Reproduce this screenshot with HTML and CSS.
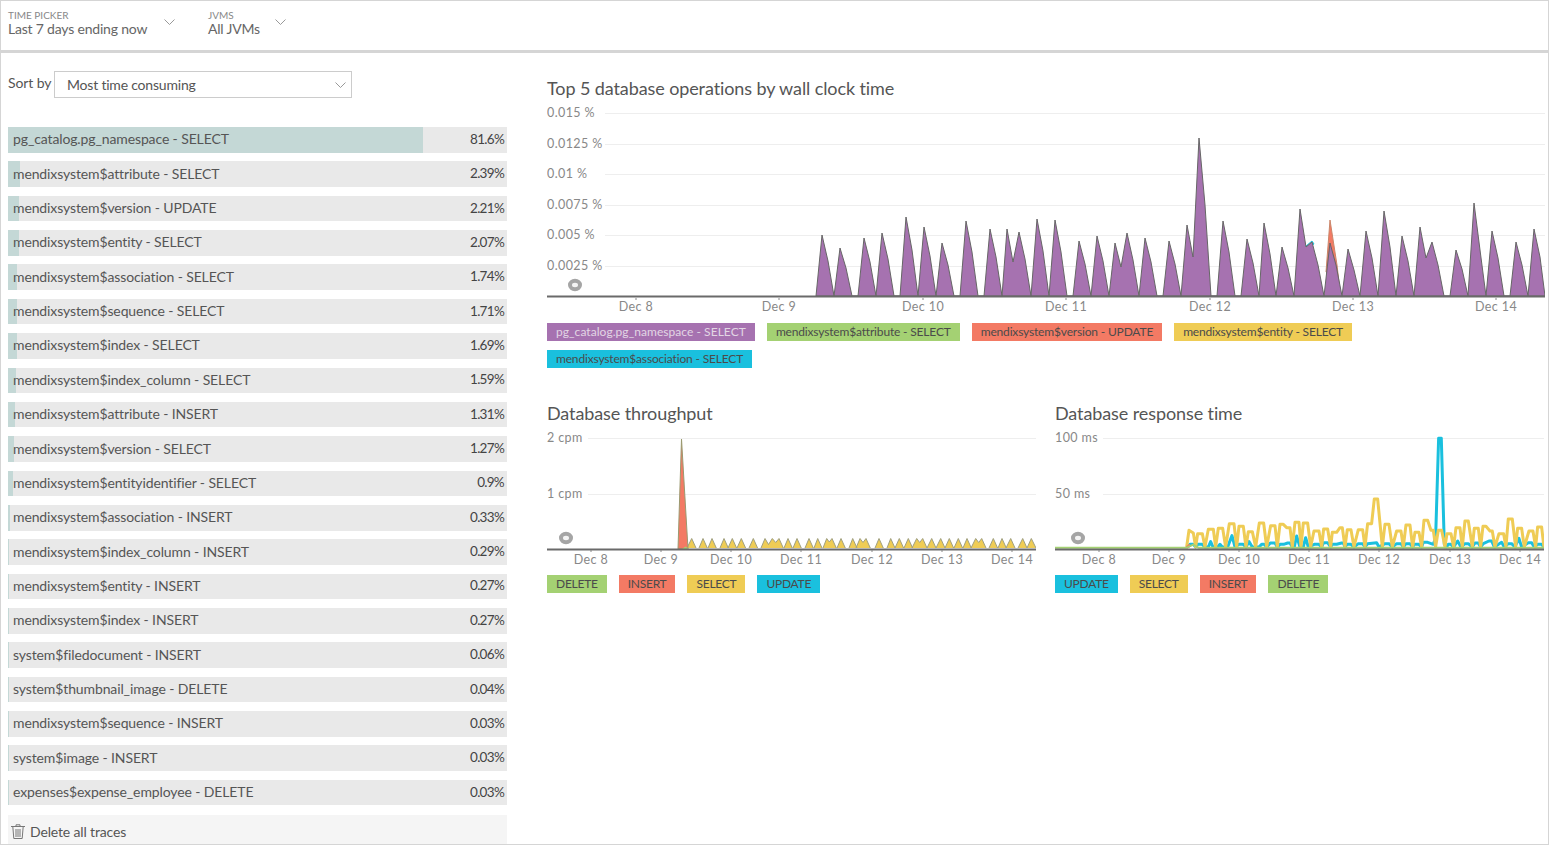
FILE: index.html
```html
<!DOCTYPE html>
<html lang="en">
<head>
  <meta charset="UTF-8">
  <title>Database</title>
  <link rel="stylesheet" href="styles.css">
</head>
<body>

  <header class="topbar">
    <div class="picker picker-time">
      <div class="picker-text">
        <span class="picker-label">Time picker</span>
        <span class="picker-value">Last 7 days ending now</span>
      </div>
      <svg class="chevron" width="11" height="6" viewBox="0 0 11 6"><path d="M.5.5l5 5 5-5"/></svg>
    </div>
    <div class="picker picker-jvm">
      <div class="picker-text">
        <span class="picker-label">JVMs</span>
        <span class="picker-value">All JVMs</span>
      </div>
      <svg class="chevron" width="11" height="6" viewBox="0 0 11 6"><path d="M.5.5l5 5 5-5"/></svg>
    </div>
  </header>

  <main class="content">
    <aside class="sidebar">
      <div class="sort">
        <span class="sort-label">Sort by</span>
        <div class="sort-select">
          <span>Most time consuming</span>
          <svg class="chevron" width="11" height="6" viewBox="0 0 11 6"><path d="M.5.5l5 5 5-5"/></svg>
        </div>
      </div>

      <ul class="ops">
        <li class="op"><span class="op-fill" style="width:83.2%"></span><span class="op-name">pg_catalog.pg_namespace - SELECT</span><span class="op-pct">81.6%</span></li>
        <li class="op"><span class="op-fill" style="width:2.44%"></span><span class="op-name">mendixsystem$attribute - SELECT</span><span class="op-pct">2.39%</span></li>
        <li class="op"><span class="op-fill" style="width:2.25%"></span><span class="op-name">mendixsystem$version - UPDATE</span><span class="op-pct">2.21%</span></li>
        <li class="op"><span class="op-fill" style="width:2.11%"></span><span class="op-name">mendixsystem$entity - SELECT</span><span class="op-pct">2.07%</span></li>
        <li class="op"><span class="op-fill" style="width:1.77%"></span><span class="op-name">mendixsystem$association - SELECT</span><span class="op-pct">1.74%</span></li>
        <li class="op"><span class="op-fill" style="width:1.74%"></span><span class="op-name">mendixsystem$sequence - SELECT</span><span class="op-pct">1.71%</span></li>
        <li class="op"><span class="op-fill" style="width:1.72%"></span><span class="op-name">mendixsystem$index - SELECT</span><span class="op-pct">1.69%</span></li>
        <li class="op"><span class="op-fill" style="width:1.62%"></span><span class="op-name">mendixsystem$index_column - SELECT</span><span class="op-pct">1.59%</span></li>
        <li class="op"><span class="op-fill" style="width:1.34%"></span><span class="op-name">mendixsystem$attribute - INSERT</span><span class="op-pct">1.31%</span></li>
        <li class="op"><span class="op-fill" style="width:1.3%"></span><span class="op-name">mendixsystem$version - SELECT</span><span class="op-pct">1.27%</span></li>
        <li class="op"><span class="op-fill" style="width:.92%"></span><span class="op-name">mendixsystem$entityidentifier - SELECT</span><span class="op-pct">0.9%</span></li>
        <li class="op"><span class="op-fill" style="width:.34%"></span><span class="op-name">mendixsystem$association - INSERT</span><span class="op-pct">0.33%</span></li>
        <li class="op"><span class="op-fill" style="width:.3%"></span><span class="op-name">mendixsystem$index_column - INSERT</span><span class="op-pct">0.29%</span></li>
        <li class="op"><span class="op-fill" style="width:.28%"></span><span class="op-name">mendixsystem$entity - INSERT</span><span class="op-pct">0.27%</span></li>
        <li class="op"><span class="op-fill" style="width:.28%"></span><span class="op-name">mendixsystem$index - INSERT</span><span class="op-pct">0.27%</span></li>
        <li class="op"><span class="op-fill" style="width:.06%"></span><span class="op-name">system$filedocument - INSERT</span><span class="op-pct">0.06%</span></li>
        <li class="op"><span class="op-fill" style="width:.04%"></span><span class="op-name">system$thumbnail_image - DELETE</span><span class="op-pct">0.04%</span></li>
        <li class="op"><span class="op-fill" style="width:.03%"></span><span class="op-name">mendixsystem$sequence - INSERT</span><span class="op-pct">0.03%</span></li>
        <li class="op"><span class="op-fill" style="width:.03%"></span><span class="op-name">system$image - INSERT</span><span class="op-pct">0.03%</span></li>
        <li class="op"><span class="op-fill" style="width:.03%"></span><span class="op-name">expenses$expense_employee - DELETE</span><span class="op-pct">0.03%</span></li>
      </ul>

      <div class="delete-all">
        <svg class="trash" width="14" height="15" viewBox="0 0 14 15">
          <path d="M0 2.5h14M5 2.5V.8h4v1.700M1.800 2.500l1 12h8.400l1-12M5 5v8M7 5v8M9 5v8"/>
        </svg>
        <span>Delete all traces</span>
      </div>
    </aside>

    <section class="charts">
      <div class="chart-block chart-top">
        <h2 class="chart-title">Top 5 database operations by wall clock time</h2>
        <svg class="chart" width="998" height="214" viewBox="547 104 998 214">
          <!-- grid -->
          <path class="grid" d="M605 113.500H1545M605 144.500H1545M605 174.500H1545M605 205.500H1545M605 235.500H1545M605 266.500H1545"/>
          <text class="ylabel" x="547" y="117">0.015 %</text>
          <text class="ylabel" x="547" y="148">0.0125 %</text>
          <text class="ylabel" x="547" y="178">0.01 %</text>
          <text class="ylabel" x="547" y="209">0.0075 %</text>
          <text class="ylabel" x="547" y="239">0.005 %</text>
          <text class="ylabel" x="547" y="270">0.0025 %</text>

          <path class="area-red" d="M1326 272L1330 220 1337 265 1339 283Z"/>
          <path class="area-trace" d="M1306 246L1312 241 1314 244 1307 248Z"/>
          <path class="area-purple" d="M816 296L822 235 828 261 834 296 840 248 846 268 852 296 858 296 864 238 870 262 876 296 882 233 888 259 894 296 900 296 906 217 912 250 918 296 924 227 930 256 936 296 942 243 948 265 954 296 960 296 966 221 972 252 978 296 984 296 990 229 996 257 1002 296 1007 229 1013 262 1019 232 1025 259 1031 296 1037 219 1043 251 1049 296 1055 220 1061 252 1067 296 1073 296 1079 241 1085 264 1091 296 1097 236 1103 261 1109 296 1115 243 1121 267 1127 233 1133 260 1139 296 1145 238 1151 262 1157 296 1163 296 1169 241 1175 264 1181 296 1187 225 1193 257 1199 138 1205 205 1211 296 1217 296 1223 221 1229 252 1235 296 1241 296 1247 239 1253 263 1259 296 1264 223 1270 254 1276 296 1282 247 1288 268 1294 296 1300 209 1306 247 1312 242 1318 265 1324 296 1330 243 1336 265 1342 296 1348 249 1354 270 1360 296 1366 231 1372 258 1378 296 1384 211 1390 247 1396 296 1402 236 1408 261 1414 296 1420 227 1426 258 1432 242 1438 265 1444 296 1450 296 1456 250 1462 269 1468 296 1474 203 1480 250 1486 296 1492 231 1498 258 1504 296 1510 296 1516 242 1522 265 1528 296 1534 229 1540 257 1545 296Z"/>

          <path class="axis" d="M547 296.500H1545"/>
          <path class="tick" d="M636 298v2M779 298v2M923 298v2M1066 298v2M1210 298v2M1353 298v2M1496 298v2"/>
          <text class="xlabel" x="636" y="311">Dec 8</text>
          <text class="xlabel" x="779" y="311">Dec 9</text>
          <text class="xlabel" x="923" y="311">Dec 10</text>
          <text class="xlabel" x="1066" y="311">Dec 11</text>
          <text class="xlabel" x="1210" y="311">Dec 12</text>
          <text class="xlabel" x="1353" y="311">Dec 13</text>
          <text class="xlabel" x="1496" y="311">Dec 14</text>

          <ellipse class="ring" cx="575" cy="285" rx="5" ry="4.200"/>
        </svg>
        <ul class="legend">
          <li class="chip chip-purple">pg_catalog.pg_namespace - SELECT</li>
          <li class="chip chip-green">mendixsystem$attribute - SELECT</li>
          <li class="chip chip-red">mendixsystem$version - UPDATE</li>
          <li class="chip chip-yellow">mendixsystem$entity - SELECT</li>
          <li class="chip chip-blue">mendixsystem$association - SELECT</li>
        </ul>
      </div>

      <div class="chart-row">
        <div class="chart-block">
          <h2 class="chart-title">Database throughput</h2>
          <svg class="chart" width="489" height="141" viewBox="547 428 489 141">
            <path class="grid" d="M588 437.500H1036M588 493.500H1036"/>
            <text class="ylabel" x="547" y="441">2 cpm</text>
            <text class="ylabel" x="547" y="497">1 cpm</text>

            <path class="area-yellow" d="M687 547l4.700-9.500 4.300 9.500M699 547l4-9.500 4.300 9.500M708 547l4-9.500 4.300 9.500M720 547l4-9.500 4.300 9.500M728 547l4.300-9.500 4.300 9.500M737 547l4.300-9.500 4.300 9.500M749 547l4.300-9.500 4.300 9.500M761 547l4-9.500 3.500 6 3.800-6 3.400 4 3.300-4 4.300 9.500M784 547l4-9.500 4.300 9.500M793 547l4-9.500 4.300 9.500M805 547l4-9.500 4.300 9.500M814 547l3.700-9.500 4.300 9.500M823 547l3.700-9.500 2.600 3.500 2.700-3.500 4.300 9.500M837 547l4-9.500 4.300 9.500M849 547l3.700-9.500 4.300 9.500M856 547l4-9.500 3 4 3-4 4.300 9.500M875 547l4-9.500 4.300 9.500M887 547l3.700-9.500 4.300 9.500M895 547l4.300-9.500 4.300 9.500M904 547l4.300-9.500 4.300 9.500M912 547l4.700-9.500 3 4 3-4 4.300 9.500M927 547l4.700-9.500 4.300 9.500M936 547l4.700-9.500 4.300 9.500M945 547l4.300-9.500 4.300 9.500M954 547l4.300-9.500 4.300 9.500M963 547l4-9.500 4.300 9.500M971 547l4.700-9.500 3 4 3-4 4.300 9.500M989 547l4.300-9.500 4.300 9.500M998 547l4-9.500 4.300 9.500M1006 547l4.700-9.500 4.300 9.500M1018 547l4.700-9.500 4.300 9.500M1027 547l4.300-9.500 4.700 9.500"/>
            <path class="area-spike" d="M678 548L681.500 438 688 548Z"/>
            <path class="area-bump" d="M682 548l3.500-2.500 3.500 2.500Z"/>

            <path class="axis" d="M547 548.500H1036"/>
            <path class="tick" d="M591 549v2M661 549v2M731 549v2M801 549v2M872 549v2M942 549v2M1012 549v2"/>
            <text class="xlabel" x="591" y="563">Dec 8</text>
            <text class="xlabel" x="661" y="563">Dec 9</text>
            <text class="xlabel" x="731" y="563">Dec 10</text>
            <text class="xlabel" x="801" y="563">Dec 11</text>
            <text class="xlabel" x="872" y="563">Dec 12</text>
            <text class="xlabel" x="942" y="563">Dec 13</text>
            <text class="xlabel" x="1012" y="563">Dec 14</text>

            <ellipse class="ring" cx="566" cy="537" rx="5" ry="4.200"/>
          </svg>
          <ul class="legend">
            <li class="chip chip-green">DELETE</li>
            <li class="chip chip-red">INSERT</li>
            <li class="chip chip-yellow">SELECT</li>
            <li class="chip chip-blue">UPDATE</li>
          </ul>
        </div>

        <div class="chart-block">
          <h2 class="chart-title">Database response time</h2>
          <svg class="chart" width="489" height="141" viewBox="1055 428 489 141">
            <path class="grid" d="M1103 437.500H1544M1103 493.500H1544"/>
            <text class="ylabel" x="1055" y="441">100 ms</text>
            <text class="ylabel" x="1055" y="497">50 ms</text>

            <g transform="translate(1045 400) scale(.3333)">
              <path class="line-blue" d="M428 438L435 430H445L452 438 458 430H472L480 438 490 438 497 422 504 438 518 438 525 430 532 438 548 438 561 404 570 438 582 430H595L603 438 612 422 622 438 642 438 650 430H658L665 438 676 426H690L697 438 705 430H716L728 426H735L742 438 748 438 755 405 765 438 775 438 782 410 790 438 808 430H822L830 438 836 425H848L857 438 862 430 875 430 890 426H895L900 438 906 430H918L927 438 940 428H953L960 438 968 428 995 425 1002 438 1020 428H1032L1042 438 1055 428H1068L1075 438 1083 428H1095L1103 438 1108 430H1122L1130 438 1135 424H1148L1165 430 1172 410 1181 112H1189L1198 430 1205 438 1210 430H1218L1226 438 1238 420 1248 438 1260 428H1270L1282 438 1290 426H1300L1307 438 1315 428 1332 420H1340L1348 438 1370 424 1378 438 1390 428H1400L1410 438 1422 412 1430 438 1450 425H1460L1468 438 1478 430H1490L1497 438"/>
              <path class="line-yellow" d="M425 438L432 388 445 396 452 438 458 398H472L480 438 490 385H505L512 438 520 382H533L542 438 553 368H567L575 438 582 376H595L603 438 610 392H622L632 438 643 366H656L665 438 677 374H690L697 438 705 370H715L725 380H735L742 438 750 364H762L768 438 775 366H788L797 438 807 390H822L830 438 836 384H848L857 438 862 394H875L885 380H892L900 438 907 386H918L927 438 940 386H953L960 438 968 368H980L988 294H998L1012 438 1020 370H1032L1042 438 1055 390H1068L1075 438 1083 372H1095L1103 438 1110 394H1122L1130 438 1137 358H1148L1158 388H1165L1172 438 1180 388H1190L1200 438 1206 398H1218L1226 438 1233 380H1245L1252 438 1260 360H1270L1282 438 1288 382H1300L1307 438 1314 376H1323L1335 390H1342L1350 438 1362 398H1376L1383 438 1390 354H1402L1412 438 1418 382H1430L1438 438 1452 390H1464L1472 438 1478 378H1490L1497 438"/>
              <path class="line-red" d="M425 440L436 432"/>
              <path class="line-green" d="M30 440H425L445 431 460 440H1497"/>
            </g>

            <path class="axis" d="M1055 548.500H1544"/>
            <path class="tick" d="M1099 549v2M1169 549v2M1239 549v2M1309 549v2M1379 549v2M1450 549v2M1520 549v2"/>
            <text class="xlabel" x="1099" y="563">Dec 8</text>
            <text class="xlabel" x="1169" y="563">Dec 9</text>
            <text class="xlabel" x="1239" y="563">Dec 10</text>
            <text class="xlabel" x="1309" y="563">Dec 11</text>
            <text class="xlabel" x="1379" y="563">Dec 12</text>
            <text class="xlabel" x="1450" y="563">Dec 13</text>
            <text class="xlabel" x="1520" y="563">Dec 14</text>

            <ellipse class="ring" cx="1078" cy="537" rx="5" ry="4.200"/>
          </svg>
          <ul class="legend">
            <li class="chip chip-blue">UPDATE</li>
            <li class="chip chip-yellow">SELECT</li>
            <li class="chip chip-red">INSERT</li>
            <li class="chip chip-green">DELETE</li>
          </ul>
        </div>
      </div>
    </section>
  </main>

</body>
</html>
```

FILE: styles.css
```css
* {
  box-sizing: border-box;
}

html, body {
  height: 100%;
}

body {
  margin: 0;
  height: 845px;
  overflow: hidden;
  background: #fff;
  color: #555;
  font-family: Lato, sans-serif;
  font-size: 14px;
  border: 1px solid #d5d5d5;
  border-top-width: 1px;
}

ul {
  list-style: none;
  margin: 0;
  padding: 0;
}

.chevron {
  fill: none;
  stroke: #999;
  stroke-width: 1;
  flex: none;
}

/* top bar */
.topbar {
  display: flex;
  height: 52px;
  padding: 9px 0 0 7px;
  border-bottom: 3px solid #d5d5d5;
}

.picker {
  display: flex;
  align-items: flex-start;
}

.picker-time {
  width: 200px;
}

.picker .chevron {
  margin-top: 9px;
}

.picker-time .chevron {
  margin-left: 17px;
}

.picker-jvm .chevron {
  margin-left: 15px;
}

.picker-text {
  display: flex;
  flex-direction: column;
}

.picker-label {
  font-size: 10px;
  line-height: 11px;
  text-transform: uppercase;
  color: #888;
}

.picker-value {
  font-size: 14px;
  line-height: 16px;
  letter-spacing: -.2px;
  color: #666;
}

/* left column */
.content {
  display: flex;
  padding-left: 7px;
}

.sidebar {
  width: 499px;
  flex: none;
}

.sort {
  display: flex;
  align-items: flex-start;
  margin-top: 18px;
  margin-bottom: 29px;
}

.sort-label {
  width: 46px;
  line-height: 24px;
  letter-spacing: -.1px;
}

.sort-select {
  display: flex;
  align-items: center;
  justify-content: space-between;
  width: 298px;
  height: 27px;
  padding: 0 5px 0 12px;
  border: 1px solid #ccc;
  letter-spacing: -.2px;
}

.ops {
  display: flex;
  flex-direction: column;
  gap: 8.77px;
}

.op {
  position: relative;
  display: flex;
  justify-content: space-between;
  align-items: center;
  height: 25.6px;
  padding: 0 3px 2px 5px;
  background: #e9e9e9;
}

.op-fill {
  position: absolute;
  left: 0;
  top: 0;
  bottom: 0;
  background: #c4d8d6;
}

.op-name, .op-pct {
  position: relative;
}

.op-name {
  letter-spacing: -.12px;
}

.op-pct {
  font-size: 13.5px;
  letter-spacing: -.7px;
  font-kerning: none;
  color: #444;
}

.delete-all {
  display: flex;
  align-items: center;
  gap: 5px;
  height: 30px;
  margin-top: 9.500px;
  padding: 4px 0 0 3px;
  background: #f5f5f5;
  letter-spacing: -.15px;
}

.trash {
  fill: none;
  stroke: #777;
  stroke-width: 1;
}

/* charts */
.charts {
  margin-left: 40px;
  width: 998px;
  padding-top: 22px;
}

.chart-title {
  margin: 0;
  font-size: 18px;
  font-weight: 400;
  line-height: 26px;
  letter-spacing: -.1px;
  color: #555;
}

.chart {
  display: block;
  margin-top: 3px;
}

.chart-row {
  display: flex;
  gap: 19px;
  margin-top: 33px;
}

.chart-row .chart-block {
  width: 489px;
}

.chart-row .chart-title {
  line-height: 25px;
}

.grid {
  fill: none;
  stroke: #eee;
  stroke-width: 1;
}

.ylabel, .xlabel {
  font-family: Lato, sans-serif;
  font-size: 12.5px;
  letter-spacing: .4px;
  fill: #888;
}

.xlabel {
  text-anchor: middle;
}

.axis {
  fill: none;
  stroke: #6a6a6a;
  stroke-width: 2;
}

.tick {
  fill: none;
  stroke: #888;
  stroke-width: 1;
}

.area-purple {
  fill: #a672b0;
  stroke: #666;
  stroke-width: 1;
}

.area-red {
  fill: #f37a64;
  stroke: #c9866a;
  stroke-width: 1;
}

.area-trace {
  fill: #8fb4a0;
  stroke: #1ac0de;
  stroke-width: 1;
}

.area-yellow {
  fill: #efcc55;
  stroke: #a0a080;
  stroke-width: 1;
}

.area-spike {
  fill: #f37a64;
  stroke: #9a9a70;
  stroke-width: 1;
}

.area-bump {
  fill: #a4d173;
}

.line-blue, .line-yellow, .line-red, .line-green {
  fill: none;
  stroke-width: 9;
  stroke-linejoin: round;
}

.line-blue {
  stroke: #1ac0de;
}

.line-yellow {
  stroke: #efcc55;
}

.line-red {
  stroke: #f37a64;
}

.line-green {
  stroke: #a4d173;
  stroke-width: 6;
}

.ring {
  fill: #f4f4f4;
  stroke: #a5a5a5;
  stroke-width: 4;
}

/* legends */
.legend {
  display: flex;
  flex-wrap: wrap;
  gap: 9px 12px;
  margin-top: 5px;
}

.chip {
  height: 18px;
  padding: 0 9px;
  font-size: 12px;
  line-height: 18px;
  letter-spacing: -.17px;
  color: #4b4b4b;
}

.chart-row .chip {
  letter-spacing: -.25px;
}

.chip-purple {
  background: #a672b0;
  color: #e2d6e4;
  letter-spacing: .05px;
}

.chip-green {
  background: #a4d173;
}

.chip-red {
  background: #f37a64;
}

.chip-yellow {
  background: #efcc55;
}

.chip-blue {
  background: #1ac0de;
}
```
